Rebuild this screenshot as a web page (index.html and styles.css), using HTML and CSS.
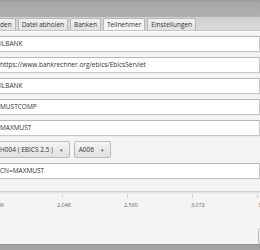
FILE: index.html
```html
<!DOCTYPE html>
<html lang="de">
<head>
  <meta charset="UTF-8">
  <title>EBICS Client - Teilnehmer</title>
  <link rel="stylesheet" href="styles.css">
</head>
<body>
  <div class="window">
    <div class="title-bar"></div>
    <div class="tab-bar">
      <div class="tab tab-cut">den</div>
      <div class="tab">Datei abholen</div>
      <div class="tab">Banken</div>
      <div class="tab selected">Teilnehmer</div>
      <div class="tab">Einstellungen</div>
    </div>
    <div class="content">
      <div class="field">ILBANK</div>
      <div class="field">https://www.bankrechner.org/ebics/EbicsServlet</div>
      <div class="field">ILBANK</div>
      <div class="field">MUSTCOMP</div>
      <div class="field">MAXMUST</div>
      <div class="combo-row">
        <div class="combo combo-cut">H004 ( EBICS 2.5 ) <span class="arrow">&#9662;</span></div>
        <div class="combo">A006 <span class="arrow">&#9662;</span></div>
      </div>
      <div class="field">CN=MAXMUST</div>
      <div class="slider">
        <div class="track"></div>
        <div class="ticks">
          <span class="tick"></span>
          <span class="tick"></span>
          <span class="tick"></span>
          <span class="tick"></span>
        </div>
        <div class="labels">
          <span class="label label-cut">1,536</span>
          <span class="label">2,048</span>
          <span class="label">2,560</span>
          <span class="label">3,072</span>
          <span class="label">3,584</span>
        </div>
      </div>
      <div class="button-row">
        <div class="button">Speichern</div>
      </div>
    </div>
    <div class="bottom-bar"></div>
  </div>
</body>
</html>
```

FILE: styles.css
```css
body {
  margin: 0;
  width: 260px;
  height: 250px;
  overflow: hidden;
  background: #f2f2f2;
  font-family: "Open Sans", "Noto Sans", sans-serif;
  font-size: 6.5px;
  color: #333;
}

.window {
  display: flex;
  flex-direction: column;
  height: 250px;
}

.title-bar {
  height: 19px;
  background: linear-gradient(to bottom, #9c9c9c, #a9a9a9 3px, #b0b0b0);
}

.tab-bar {
  display: flex;
  gap: 2px;
  height: 13px;
  padding: 1px 0 0 0;
  background: linear-gradient(to bottom, #cfcfcf, #dadada);
  border-bottom: 1px solid #c4c4c4;
  overflow: hidden;
}

.tab {
  padding: 0 3px;
  line-height: 12px;
  background: linear-gradient(to bottom, #f0f0f0, #e2e2e2);
  border: 1px solid #b8b8b8;
  border-bottom: none;
  border-radius: 2px 2px 0 0;
  white-space: nowrap;
}

.tab-cut {
  margin-left: -4px;
}

.tab.selected {
  background: #f4f4f4;
}

.content {
  flex: 1;
  display: flex;
  flex-direction: column;
  gap: 5px;
  padding-top: 4px;
  background: #f4f4f4;
  border-top: 1px solid #fdfdfd;
}

.field {
  height: 14px;
  line-height: 14px;
  margin-left: -4px;
  padding-left: 3px;
  background: #fff;
  border: 1px solid #c6c6c6;
  border-top-color: #b8b8b8;
  box-shadow: 0 1px 0 #ececec;
  white-space: nowrap;
}

.combo-row {
  display: flex;
  gap: 4px;
  margin-left: -4px;
}

.combo {
  height: 15px;
  line-height: 15px;
  padding: 0 6px 0 4px;
  background: linear-gradient(to bottom, #f4f4f4, #e0e0e0);
  border: 1px solid #bcbcbc;
  border-radius: 2px;
  white-space: nowrap;
}

.combo-cut {
  padding-left: 3px;
}

.arrow {
  font-size: 5px;
  margin-left: 5px;
  color: #555;
}

.slider {
  display: flex;
  flex-direction: column;
  margin-top: 7px;
}

.track {
  height: 2px;
  background: #e6e6e6;
  border-top: 1px solid #d2d2d2;
  border-bottom: 1px solid #fafafa;
}

.ticks {
  display: flex;
  gap: 64px;
  padding-left: 62px;
  height: 4px;
}

.tick {
  width: 1px;
  height: 3px;
  background: #cfcfcf;
}

.labels {
  display: flex;
  justify-content: space-between;
  margin: 2px -12px 0 -10px;
  color: #666;
  font-size: 5.5px;
}

.button-row {
  display: flex;
  justify-content: flex-end;
  margin-top: 14px;
  margin-right: -40px;
}

.button {
  height: 14px;
  line-height: 14px;
  padding: 0 5px;
  background: linear-gradient(to bottom, #f6f6f6, #e2e2e2);
  border: 1px solid #b9b9b9;
  border-radius: 2px;
}

.bottom-bar {
  height: 5px;
  background: #a3a3a3;
  border-top: 1px solid #8f8f8f;
}
```
